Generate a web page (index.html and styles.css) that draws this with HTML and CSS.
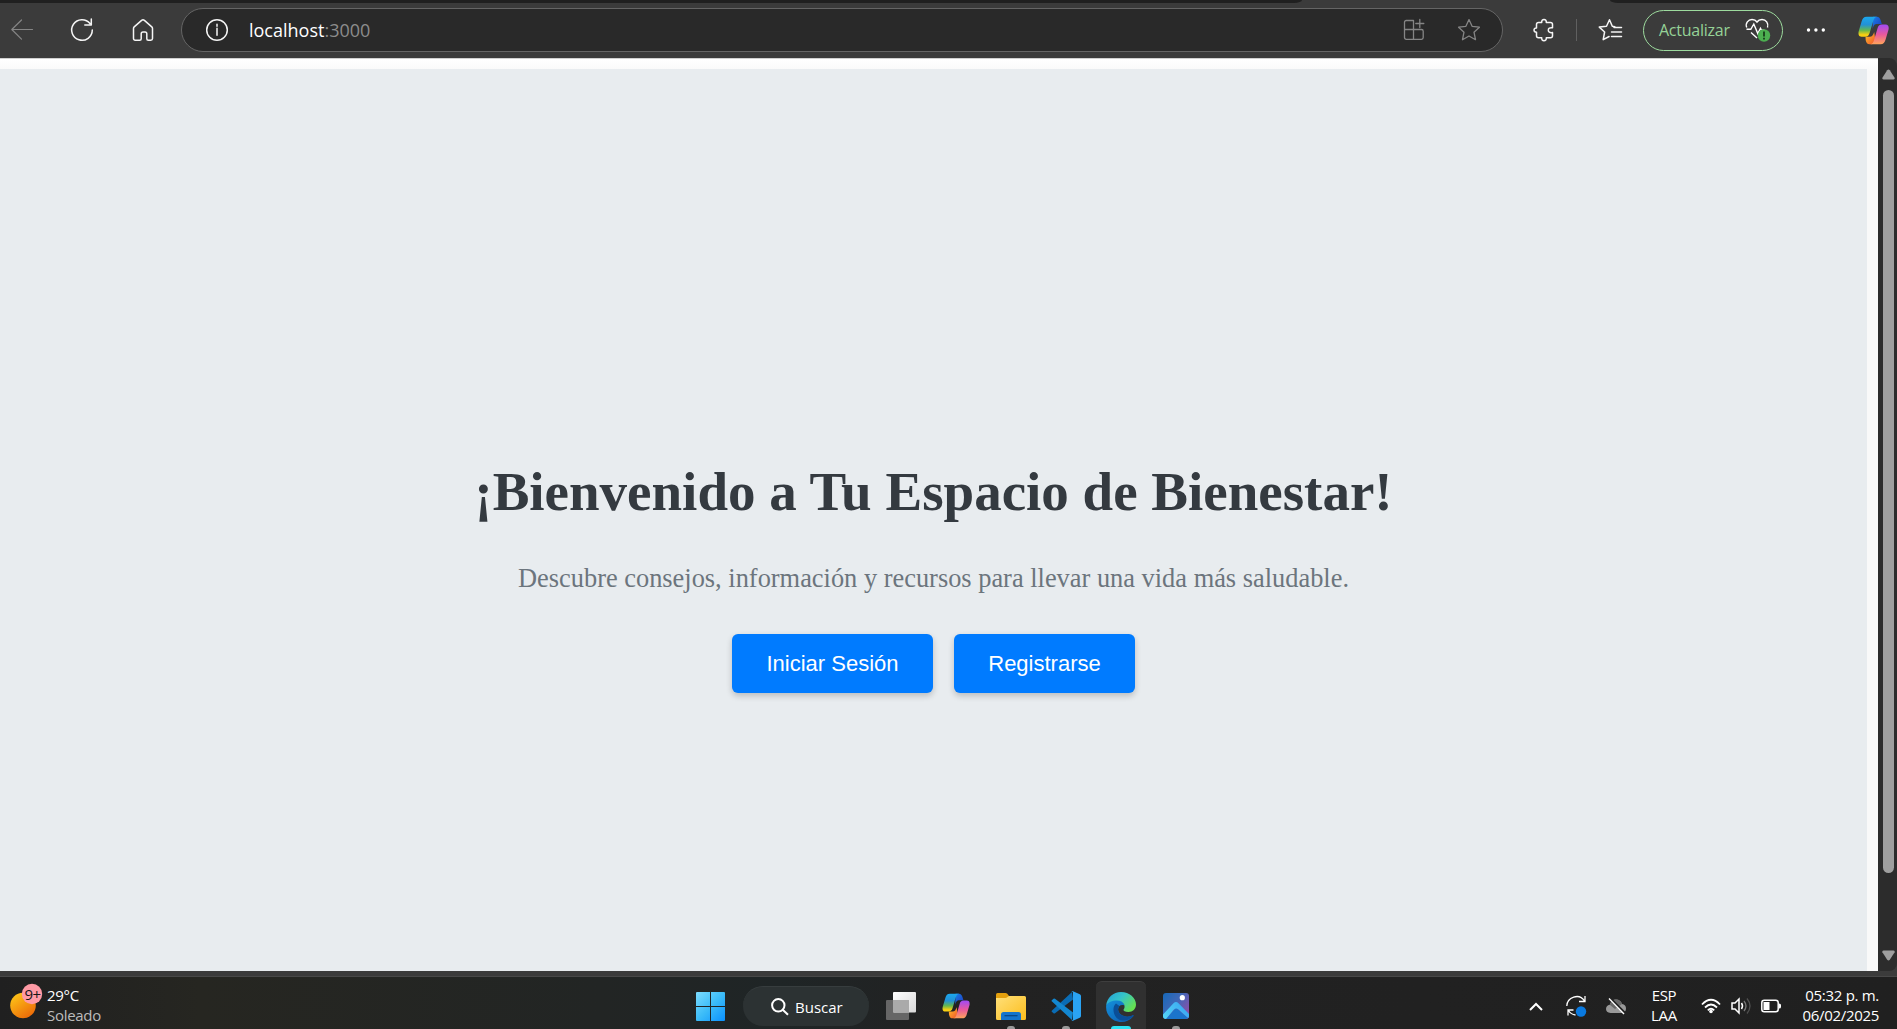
FILE: index.html
```html
<!DOCTYPE html>
<html lang="es">
<head>
<meta charset="utf-8">
<title>Tu Espacio de Bienestar</title>
<link rel="stylesheet" href="styles.css">
</head>
<body>
<svg class="defs" aria-hidden="true">
  <defs>
    <linearGradient id="cpA" x1="0" y1="0" x2="0" y2="1"><stop offset="0" stop-color="#1ba8ee"/><stop offset=".4" stop-color="#2391d6"/><stop offset=".68" stop-color="#65b84d"/><stop offset=".9" stop-color="#f7cf12"/></linearGradient>
    <linearGradient id="cpB" x1="0" y1="0" x2="0" y2="1"><stop offset="0" stop-color="#a04af5"/><stop offset=".5" stop-color="#e8589d"/><stop offset="1" stop-color="#ffa45a"/></linearGradient>
    <linearGradient id="cpC" x1="0" y1="0" x2="1" y2="1"><stop offset="0" stop-color="#1a7fe8"/><stop offset="1" stop-color="#1d38bd"/></linearGradient>
    <linearGradient id="cpD" x1="0" y1="0" x2="1" y2="1"><stop offset="0" stop-color="#ffc027"/><stop offset="1" stop-color="#f0532d"/></linearGradient>
    <linearGradient id="sun" x1="0" y1="0" x2=".7" y2="1"><stop offset="0" stop-color="#ffcf1a"/><stop offset="1" stop-color="#ec6a08"/></linearGradient>
    <linearGradient id="win" gradientUnits="userSpaceOnUse" x1="0" y1="0" x2="29" y2="29"><stop offset="0" stop-color="#7cdcff"/><stop offset=".5" stop-color="#3cbcf8"/><stop offset="1" stop-color="#0a91ff"/></linearGradient>
    <linearGradient id="tvA" x1="0" y1="0" x2="1" y2="1"><stop offset="0" stop-color="#fff"/><stop offset="1" stop-color="#d8d8d8"/></linearGradient>
    <linearGradient id="fold" x1="0" y1="0" x2="1" y2="1"><stop offset="0" stop-color="#ffe07a"/><stop offset="1" stop-color="#fcbd1c"/></linearGradient>
    <linearGradient id="edA" x1="0" y1="0" x2="1" y2=".6"><stop offset="0" stop-color="#229fd9"/><stop offset=".5" stop-color="#35c4c9"/><stop offset="1" stop-color="#65e052"/></linearGradient>
    <linearGradient id="edB" x1="0" y1="0" x2="1" y2="1"><stop offset="0" stop-color="#1592dc"/><stop offset="1" stop-color="#0b58ae"/></linearGradient>
    <linearGradient id="phA" x1="0" y1="0" x2="1" y2=".7"><stop offset="0" stop-color="#1668b8"/><stop offset=".5" stop-color="#3f68b8"/><stop offset="1" stop-color="#8a50a8"/></linearGradient>
    <linearGradient id="phB" x1="0" y1="1" x2="1" y2=".6"><stop offset="0" stop-color="#55d6f7"/><stop offset="1" stop-color="#3aa8f2"/></linearGradient>
    <symbol id="copilot" viewBox="0 0 31 29">
      <path fill="url(#cpC)" d="M15 .7h3.7c2.3 0 3.3 1.3 4.1 4l1 3.3h-4.7c-2.5 0-3.3 1.2-4.500 5z"/>
      <path fill="url(#cpD)" d="M7.500 20.700h4.200c2.500 0 3.500-1.500 4.500-4.700l1.300 8.500c-.5 2.600-1.700 3.800-4.200 3.800h-1.800c-2.300 0-3.100-1.500-3.800-4z"/>
      <path fill="url(#cpA)" d="M8.700.7H19c-2.300.3-3.100 2-4 5l-3.200 10.800c-.8 2.800-2 4.200-4.600 4.200H3.600C.6 20.700 0 18 .8 15L3.600 5.500C4.500 2.300 5.700.7 8.700.7z"/>
      <path fill="url(#cpB)" d="M22.500 28.300H12.300c2.300-.3 3.200-2 4-5l3.100-10.600c.8-2.900 2-4.200 4.600-4.200h3.500c3 0 3.700 2.500 2.900 5.500l-2.800 9.500c-.9 3.200-2.100 4.800-5.100 4.800z"/>
    </symbol>
  </defs>
</svg>

<div class="tabstrip"><span class="tab tab-left"></span><span class="tab tab-right"></span></div>

<header class="toolbar">
  <svg class="ic back" width="22" height="22" viewBox="0 0 22 22"><path d="M21.500 10.500H.8M10.500 1 .8 10.500l9.700 9.700"/></svg>
  <svg class="ic reload" width="24" height="24" viewBox="0 0 24 24"><path d="M20 5.500A10.300 10.300 0 1 0 22.300 12M21.300 1v6h-6.500"/></svg>
  <svg class="ic home" width="22" height="23" viewBox="0 0 22 23"><path d="M1.500 9.600c0-.7.2-1.200.7-1.700l7.400-6.500c.8-.7 2-.7 2.800 0l7.400 6.500c.5.5.7 1 .7 1.700v10c0 1-.7 1.700-1.700 1.700h-2.500c-.9 0-1.500-.6-1.500-1.500v-5c0-1-.8-1.800-1.800-1.800h-2c-1 0-1.800.8-1.800 1.800v5c0 .9-.6 1.500-1.500 1.500H3.200c-1 0-1.700-.7-1.700-1.700z"/></svg>
  <div class="address">
    <svg class="ic info" width="24" height="24" viewBox="0 0 24 24"><circle cx="12" cy="12" r="10.300"/><path d="M12 10.300v7M12 6.300v2"/></svg>
    <span class="url">localhost<span class="port">:3000</span></span>
    <svg class="ic dim apps" width="22" height="22" viewBox="0 0 22 22"><path d="M10.500 20.300H3.200c-1 0-1.700-.7-1.700-1.700V3.200c0-1 .7-1.700 1.700-1.700h7.300v18.800zM1.500 10.500h17c1 0 1.700.7 1.700 1.700v6.400c0 1-.7 1.700-1.700 1.700h-8M16.800.5v8M12.800 4.500h8"/></svg>
    <svg class="ic dim star" width="24" height="24" viewBox="0 0 24 24"><path d="M12 1.600l3.100 6.700 7.300.9-5.400 5 1.500 7.500L12 18l-6.500 3.700L7 14.200l-5.400-5 7.300-.9z"/></svg>
  </div>
  <svg class="ic puzzle" width="22" height="24" viewBox="0 0 22 24"><path d="M5.500 4.500h3.200c-.2-2 .8-3 2.300-3s2.500 1 2.300 3h4.200c1.200 0 2 .8 2 2v3.300c-2.800-.4-4.200.6-4.200 2.400s1.400 2.800 4.200 2.400v3.200c0 1.200-.8 2-2 2h-4.200c.2 2-.8 3-2.300 3s-2.500-1-2.300-3H5.500c-1.200 0-2-.8-2-2v-3.500c-1.800 0-2.500-1-2.500-2.200s.7-2.200 2.500-2.200V6.500c0-1.200.8-2 2-2z"/></svg>
  <span class="divider"></span>
  <svg class="ic favs" width="24" height="24" viewBox="0 0 24 24"><path d="M16.800 8.700l-2.500-.5L11.500 1.700 8.500 8.200l-7.200.9 5.300 4.900-1.400 7.700 5.900-3.200M16 9.500h7.500M13.500 14h10M13.500 18.500h10"/></svg>
  <div class="update">
    <span>Actualizar</span>
    <svg width="26" height="24" viewBox="0 0 26 24"><path class="stroke" d="M1.700 9.500C0 5 3.300 1.500 7 1.500c2.500 0 4 1 5 2.500 1-1.500 2.500-2.500 5-2.500 4 0 6.800 3.500 5.500 8M1.500 11.300h4.300l3-5.300 4 9.500 2.700-5.200 1 2h3M6 14.500l6 5.500"/><circle cx="19" cy="17.500" r="6.200" fill="#4caf50"/><path stroke="#183d1a" stroke-width="1.800" d="M19 13.500v5M19 19.800v1.700"/></svg>
  </div>
  <svg class="dots" width="20" height="6" viewBox="0 0 20 6"><circle cx="2.500" cy="3" r="1.700"/><circle cx="9.900" cy="3" r="1.700"/><circle cx="17.300" cy="3" r="1.700"/></svg>
  <svg class="copilot-btn" width="31" height="29"><use href="#copilot"/></svg>
</header>

<div class="viewport">
  <div class="page">
    <main class="hero">
      <h1>¡Bienvenido a Tu Espacio de Bienestar!</h1>
      <p>Descubre consejos, información y recursos para llevar una vida más saludable.</p>
      <div class="actions">
        <button class="login">Iniciar Sesión</button>
        <button class="register">Registrarse</button>
      </div>
    </main>
  </div>
  <div class="scrollbar">
    <svg width="13" height="11" viewBox="0 0 13 11"><path d="M5.200 1.200Q6.500-.3 7.800 1.200l4.800 7.600q.6 1.700-1.100 1.700h-10Q-.2 10.500.4 8.800z"/></svg>
    <span class="thumb"></span>
    <svg class="down" width="13" height="11" viewBox="0 0 13 11"><path d="M5.200 9.800q1.300 1.500 2.600 0l4.800-7.600Q13.200.5 11.500.5h-10Q-.2.5.4 2.200z"/></svg>
  </div>
</div>
<div class="window-edge"></div>

<footer class="taskbar">
  <svg class="weather" width="33" height="36" viewBox="0 0 33 36"><circle cx="13" cy="22.500" r="12.800" fill="url(#sun)"/><circle cx="22" cy="11" r="10.200" fill="#ff9aa5"/><text x="14.500" y="16.500">9+</text></svg>
  <div class="weather-text"><span>29°C</span><span class="sub">Soleado</span></div>
  <svg class="start" width="29" height="29" viewBox="0 0 29 29"><path fill="url(#win)" d="M1 0h13v14H0V1q0-1 1-1zM15 0h13q1 0 1 1v13H15zM0 15h14v14H1q-1 0-1-1zM15 15h14v13q0 1-1 1H15z"/></svg>
  <div class="search">
    <svg width="18" height="18" viewBox="0 0 18 18"><circle cx="7.300" cy="7.300" r="6.200"/><path d="M11.700 11.700l5.300 5"/></svg>
    <span>Buscar</span>
  </div>
  <svg class="taskview" width="30" height="28" viewBox="0 0 30 28"><rect y="8" width="23" height="20" rx="1" fill="#666"/><rect x="7" width="23" height="20.500" rx="1" fill="url(#tvA)"/><path fill="#aaa" d="M7 8h16v12.500H8q-1 0-1-1z"/></svg>
  <svg class="copilot-task" width="28" height="26"><use href="#copilot"/></svg>
  <div class="app explorer">
    <svg width="30" height="30" viewBox="0 0 30 30"><path fill="#e4a00d" d="M0 3.500Q0 2 1.500 2h8q1 0 1.800.8L13 5v5H0z"/><path fill="url(#fold)" d="M0 7h9.500q1 0 1.700-.7L13 5h15.500Q30 5 30 6.500v21q0 1.500-1.500 1.500h-27Q0 29 0 27.500z"/><path fill="#1574cc" d="M5 29v-5.500Q5 21 7.500 21h15q2.500 0 2.500 2.500V29z"/><path stroke="#0a4380" stroke-width="1.200" d="M8.500 24.700h13"/></svg>
    <i class="mark"></i>
  </div>
  <div class="app code">
    <svg width="30" height="30" viewBox="0 0 30 30"><path fill="#0a6cb4" d="M1 19.500 21 1l1 7.500L4 22.300q-.8.500-1.500 0L.8 20.800Q.2 20.200 1 19.500z"/><path fill="#1387d0" d="M1 10.500 21 29l1-7.500L4 7.700q-.8-.5-1.500 0L.8 9.200q-.6.600.2 1.300z"/><path fill="#2aa3f3" d="M22 .2l6.800 3.100Q30 3.900 30 5v20q0 1.100-1.200 1.700L22 29.800q-1 .3-1.700-.5 1.700.5 1.700-1.300V2Q22 .2 20.300.7 21-.1 22 .2z"/></svg>
    <i class="mark"></i>
  </div>
  <div class="app active">
    <svg width="30" height="30" viewBox="0 0 30 30"><path fill="url(#edB)" d="M.2 13.500C1.500 8.500 6 7 10 7c5 0 8.500 3 8.500 6.500-5-2-8 3-5.500 7 2.300 4 9 5.500 13.500 2.700.8-.4 1.300.2.800 1C24.500 28 20 30 15.500 30 6.500 30-.8 23 .2 13.500z"/><path fill="#0a4e97" d="M10 11.500c-4.500 4-2.500 12.500 2 15.500 4.500 3 11 1.500 15-2.500.9-1 .5-1.800-.5-1.300-4.500 2.800-11.200 1.300-13.500-2.700-1.400-2.500-1-5 .4-6.500z"/><path fill="url(#edA)" d="M.2 13.500C1 5.500 7.300 0 15 0c8.500 0 15 6 15 12.500 0 4.500-3.300 7.500-7.500 7.500-3.500 0-5.300-1.200-5-2.200 2.500-2.800 1-9.300-6.500-9.300-5 0-9 1.500-10.800 5z"/></svg>
    <i class="mark"></i>
  </div>
  <div class="app photos">
    <svg width="26" height="26" viewBox="0 0 26 26"><rect width="26" height="26" rx="3" fill="url(#phA)"/><path fill="#1b74cc" d="M13 15 3 26h20q1.300 0 2.300-1z"/><path fill="url(#phB)" d="M3 26q-3 0-3-3v-1.500L10.500 10.200q2.500-2.400 5 0L26 21v2q0 1.300-.8 2.100L15.500 16.500q-2.500-2-4.500 0z"/><circle cx="19.300" cy="4.700" r="2.600" fill="#fff"/></svg>
    <i class="mark"></i>
  </div>
  <svg class="tray chevron" width="14" height="9" viewBox="0 0 14 9"><path stroke-width="2" d="M1 8l6-6 6 6"/></svg>
  <svg class="tray sync" width="21" height="22" viewBox="0 0 21 22"><path stroke-width="1.300" d="M.8 11C1 2.500 13-2.500 18.500 6M19 1v5.500h-6M2 20.500V15h5.500M2.500 15.500q2.500 4 7 4.500"/><circle cx="15" cy="16.500" r="5.200" fill="#0a7ae0" stroke="none"/></svg>
  <svg class="tray cloud" width="20" height="17" viewBox="0 0 20 17"><path fill="#999" stroke="none" d="M4.500 15Q0 14.500 0 11q0-3.500 3.800-4.200Q5.500 1.500 10 1.500q4.500 0 6 4.500 4 .7 4 4.500t-4 4.500z"/><path fill="#686868" stroke="none" d="M3.800 6.800Q5.500 1.500 10 1.500q4.500 0 6 4.500L9 11z"/><path stroke="#222" stroke-width="3" d="M4 .5l15 15"/><path stroke-width="1.400" d="M3 .5l15 15.500"/></svg>
  <div class="language"><span>ESP</span><span>LAA</span></div>
  <svg class="tray wifi" width="20" height="16" viewBox="0 0 20 16"><path stroke-width="1.800" d="M1 6.500q9-9.500 18 0M4 9.500q6-6 12 0M6.800 12.300q3.200-3.200 6.400 0"/><circle cx="10" cy="13.500" r="1.800" fill="#fff" stroke="none"/></svg>
  <svg class="tray volume" width="21" height="18" viewBox="0 0 21 18"><path stroke-width="1.500" d="M1 6h3L8 2v14l-4-4H1zM10.500 6q2 3 0 6"/><path stroke="#777" stroke-width="1.300" d="M13 4q4 5 0 10"/><path stroke="#505050" stroke-width="1.300" d="M16 1.500q6 7.500 0 15"/></svg>
  <svg class="tray battery" width="20" height="14" viewBox="0 0 20 14"><rect x=".8" y="1.300" width="16.400" height="11.400" rx="2.500" stroke-width="1.500"/><path fill="#fff" stroke="none" d="M2.500 3h6v8h-6zM18 4.500q2 0 2 1.500v2q0 1.500-2 1.500z"/></svg>
  <div class="clock"><span class="time">05:32 p. m.</span><span class="date">06/02/2025</span></div>
</footer>
</body>
</html>
```
FILE: styles.css
```css
* { box-sizing: border-box; }

body {
  margin: 0;
  width: 1897px;
  height: 1029px;
  overflow: hidden;
  display: flex;
  flex-direction: column;
  background: #3b3b3b;
  font-family: "Open Sans", "Noto Sans", sans-serif;
  color: #fff;
}

svg { display: block; flex: none; fill: none; overflow: visible; }
.defs { position: absolute; width: 0; height: 0; }

/* Browser chrome */
.tabstrip { height: 3px; flex: none; display: flex; justify-content: space-between; }
.tab { background: #202020; }
.tab-left { width: 1302px; border-bottom-right-radius: 8px 3px; }
.tab-right { width: 287px; border-bottom-left-radius: 8px 3px; }

.toolbar { height: 55px; flex: none; padding-bottom: 1px; display: flex; align-items: center; }
.ic { stroke: #f5f5f5; stroke-width: 1.5; stroke-linejoin: round; stroke-linecap: round; }
.ic.back { margin-left: 11px; stroke: #858585; stroke-width: 1.2; }
.ic.reload { margin-left: 37px; }
.ic.home { margin-left: 38px; }

.address {
  width: 1322px;
  height: 44px;
  margin-left: 27px;
  border: 1px solid #656565;
  border-radius: 22px;
  background: #292929;
  display: flex;
  align-items: center;
}
.info { margin-left: 23px; }
.url { width: 160px; margin-left: 20px; font-size: 18px; line-height: 26px; white-space: nowrap; }
.port { color: #8c8c8c; }
.ic.dim { stroke: #858585; stroke-width: 1.3; }
.apps { margin-left: 994px; }
.star { margin-left: 32px; }
.puzzle { margin-left: 30px; }
.divider { width: 1px; height: 22px; margin-left: 21px; background: #606060; }
.favs { margin-left: 21px; }
.update {
  width: 140px;
  height: 41px;
  margin-left: 21px;
  padding-left: 15px;
  border: 1px solid #9ddb9e;
  border-radius: 21px;
  display: flex;
  align-items: center;
  color: #96d297;
  font-size: 16px;
  letter-spacing: -.25px;
}
.update span { width: 86px; white-space: nowrap; }
.update .stroke { stroke: #fff; stroke-width: 1.4; }
.dots { margin-left: 23px; fill: #fff; }
.copilot-btn { margin-left: 32px; }

/* Page */
.viewport { height: 913px; flex: none; display: flex; }
.page {
  flex: 1;
  padding: 10px 11px 0 0;
  background: linear-gradient(#fff, #f9f9f9 12px);
  border-top: 1px solid #d0d0d0;
  overflow: hidden;
}
.hero {
  height: 902px;
  padding-top: 391px;
  background: #e8ecef;
  display: flex;
  flex-direction: column;
  align-items: center;
}
.hero h1 {
  margin: 0;
  font: bold 55px/64px "Liberation Serif", "Times New Roman", serif;
  color: #343a40;
  white-space: nowrap;
}
.hero p {
  margin: 39px 0 0;
  font: 26.4px/30px "Liberation Serif", "Times New Roman", serif;
  color: #6c757d;
  white-space: nowrap;
}
.actions { display: flex; gap: 21px; margin-top: 41px; }
.actions button {
  height: 59px;
  border: 0;
  border-radius: 6px;
  background: #007bff;
  color: #fff;
  padding: 0;
  font: 22px "Liberation Sans", Arial, sans-serif;
  box-shadow: 0 3px 6px rgba(0, 0, 0, .2);
}
.login { width: 201px; }
.register { width: 181px; }

.scrollbar {
  width: 19px;
  background: #2c2c2c;
  border-radius: 0 8px 8px 0;
  padding: 11px 2px 10px 4px;
  display: flex;
  flex-direction: column;
}
.scrollbar svg { fill: #9f9f9f; }
.thumb { width: 11px; height: 783px; margin: 10px 0 0 1px; border-radius: 6px; background: #9f9f9f; }
.down { margin-top: auto; }
.window-edge { height: 6px; flex: none; background: #3b3b3b; border-bottom: 1px solid #484848; }

/* Taskbar */
.taskbar {
  height: 52px;
  flex: none;
  padding: 6px 0 0;
  display: flex;
  align-items: center;
  background: linear-gradient(90deg, #202020, #262621 200px, #222524 600px, #1f2526 780px, #222 950px, #202020);
  font-size: 15px;
  line-height: 20px;
  letter-spacing: -.3px;
  white-space: nowrap;
}
.weather { margin: -10px 0 0 10px; }
.weather text { font: 15px "Open Sans", sans-serif; fill: #171717; letter-spacing: -.5px; }
.weather-text, .language, .clock { display: flex; flex-direction: column; padding-bottom: 2px; }
.weather-text { width: 70px; margin-left: 4px; }
.sub { color: #bcbcbc; }
.start { margin-left: 579px; }
.search {
  width: 126px;
  height: 40px;
  margin-left: 18px;
  padding-left: 28px;
  border-radius: 20px;
  background: #2c3233;
  border-top: 1px solid #373d3e;
  display: flex;
  align-items: center;
  gap: 6px;
  font-weight: 500;
  letter-spacing: 0;
}
.search svg { stroke: #fff; stroke-width: 2; }
.taskview { margin-left: 17px; }
.copilot-task { margin-left: 26px; }
.app {
  width: 50px;
  height: 48px;
  margin: -2px 0 0 5px;
  padding-top: 2px;
  border-radius: 6px 6px 0 0;
  display: flex;
  align-items: center;
  justify-content: center;
  position: relative;
}
.explorer { margin-left: 16px; }
.active { background: #303030; border-top: 1px solid #3e3e3e; }
.mark { position: absolute; bottom: 0; left: 21px; width: 8px; height: 3px; border-radius: 3px 3px 0 0; background: #999; }
.active .mark { left: 15px; width: 20px; background: #2de3f5; }
.tray { stroke: #fff; }
.chevron { margin-left: 328px; }
.sync { margin-left: 23px; }
.cloud { margin-left: 19px; }
.language { width: 38px; margin-left: 19px; align-items: center; }
.wifi { margin-left: 18px; }
.volume { margin-left: 10px; }
.battery { margin-left: 9px; }
.clock { width: 98px; align-items: flex-end; }
```
